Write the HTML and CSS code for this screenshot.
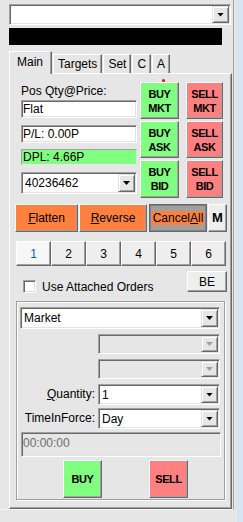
FILE: index.html
```html
<!DOCTYPE html>
<html lang="en">

<head>
    <meta charset="UTF-8">
    <meta name="viewport" content="width=device-width, initial-scale=1.0">
    <title>Order Entry</title>
    <link rel="stylesheet" href="styles.css">
</head>

<body>
    <div class="frame">
        <div class="combo symbol-combo">
            <span class="combo-text"></span>
            <span class="drop"></span>
        </div>
        <div class="ticker"></div>

        <div class="tabs">
            <span class="tab active">Main</span>
            <span class="tab">Targets</span>
            <span class="tab">Set</span>
            <span class="tab">C</span>
            <span class="tab">A</span>
        </div>

        <div class="page">
            <div class="quote">
                <div class="position">
                    <div class="pos-label">Pos Qty@Price:</div>
                    <div class="field">Flat</div>
                    <div class="field pl">P/L: 0.00P</div>
                    <div class="field dpl">DPL: 4.66P</div>
                    <div class="combo account-combo">
                        <span class="combo-text">40236462</span>
                        <span class="drop"></span>
                    </div>
                </div>
                <div class="trade-grid">
                    <button class="btn buy mkt">BUY<br>MKT<span class="dot"></span></button>
                    <button class="btn sell">SELL<br>MKT</button>
                    <button class="btn buy">BUY<br>ASK</button>
                    <button class="btn sell">SELL<br>ASK</button>
                    <button class="btn buy">BUY<br>BID</button>
                    <button class="btn sell">SELL<br>BID</button>
                </div>
            </div>

            <div class="actions">
                <button class="btn orange flatten"><u>F</u>latten</button>
                <button class="btn orange reverse"><u>R</u>everse</button>
                <button class="btn cancel-all"><span>Cancel<u>A</u>ll</span></button>
                <button class="btn light m-btn">M</button>
            </div>

            <div class="slots">
                <button class="btn light slot selected">1</button>
                <button class="btn light slot">2</button>
                <button class="btn light slot">3</button>
                <button class="btn light slot">4</button>
                <button class="btn light slot">5</button>
                <button class="btn light slot">6</button>
            </div>

            <div class="attach">
                <span class="checkbox"></span>
                <span class="attach-label">Use Attached Orders</span>
                <button class="btn light be-btn">BE</button>
            </div>

            <div class="group">
                <div class="combo type-combo">
                    <span class="combo-text">Market</span>
                    <span class="drop"></span>
                </div>
                <div class="row">
                    <span class="row-label"></span>
                    <div class="combo disabled">
                        <span class="combo-text"></span>
                        <span class="drop"></span>
                    </div>
                </div>
                <div class="row">
                    <span class="row-label"></span>
                    <div class="combo disabled">
                        <span class="combo-text"></span>
                        <span class="drop"></span>
                    </div>
                </div>
                <div class="row qty-row">
                    <span class="row-label"><u>Q</u>uantity:</span>
                    <div class="combo">
                        <span class="combo-text">1</span>
                        <span class="drop"></span>
                    </div>
                </div>
                <div class="row tif-row">
                    <span class="row-label">TimeInForce:</span>
                    <div class="combo">
                        <span class="combo-text">Day</span>
                        <span class="drop"></span>
                    </div>
                </div>
                <div class="time-box">00:00:00</div>
                <div class="submit">
                    <button class="btn buy submit-btn">BUY</button>
                    <button class="btn sell submit-btn">SELL</button>
                </div>
            </div>
        </div>
    </div>
    <div class="rail"></div>
</body>

</html>
```

FILE: styles.css
```css
body {
    margin: 0;
    width: 243px;
    height: 522px;
    display: flex;
    background-color: #e6e6e6;
    font-family: "Liberation Sans", Arial, sans-serif;
    font-size: 12px;
    color: #000;
    overflow: hidden;
}

.frame {
    width: 233px;
    height: 505px;
    padding-top: 4px;
    border-right: 1px solid #a0a0a0;
    border-bottom: 1px solid #f4f4f4;
}

.rail {
    margin-left: auto;
    width: 6px;
    background-color: #d7e4f3;
}

/* sunken inputs */
.combo,
.field,
.time-box,
.checkbox {
    box-sizing: border-box;
    background-color: #fff;
    border: 1px solid;
    border-color: #a0a0a0 #fff #fff #a0a0a0;
    box-shadow: inset 1px 1px #696969, inset -1px -1px #e3e3e3;
}

.combo {
    display: flex;
    height: 22px;
    padding: 1px;
}

.combo-text {
    flex: 1;
    padding: 1px 0 0 2px;
    line-height: 17px;
}

.drop {
    width: 17px;
    box-sizing: border-box;
    background-color: #e6e6e6;
    border: 1px solid;
    border-color: #e3e3e3 #696969 #696969 #e3e3e3;
    box-shadow: inset 1px 1px #fff, inset -1px -1px #a0a0a0;
    display: flex;
    align-items: center;
    justify-content: center;
}

.drop::after {
    content: "";
    width: 7px;
    height: 4px;
    background-color: #000;
    clip-path: polygon(0 0, 100% 0, 50% 100%);
}

.combo.disabled {
    background-color: #e6e6e6;
}

.combo.disabled .drop::after {
    background-color: #a0a0a0;
}

.symbol-combo {
    margin-left: 9px;
    width: 222px;
    height: 21px;
}

.ticker {
    margin: 3px 0 0 9px;
    width: 213px;
    height: 17px;
    background-color: #000;
}

/* tabs */
.tabs {
    display: flex;
    align-items: flex-end;
    margin: 6px 0 0 9px;
    height: 22px;
}

.tab {
    box-sizing: border-box;
    height: 19px;
    padding: 2px 4px 0 4px;
    line-height: 14px;
    border-left: 1px solid #fff;
    border-top: 1px solid #fff;
    border-right: 1px solid #696969;
    box-shadow: inset -1px 0 #a0a0a0;
    margin-left: 1px;
}

.tab.active {
    position: relative;
    z-index: 1;
    height: 23px;
    margin: 0 0 -1px 0;
    padding: 3px 8px 0 7px;
    background-color: #e6e6e6;
}

.page {
    box-sizing: border-box;
    margin-left: 9px;
    width: 223px;
    height: 436px;
    border: 1px solid;
    border-color: #fff #696969 #696969 #fff;
    box-shadow: inset -1px -1px #a0a0a0;
}

/* position and quick trade */
.quote {
    display: flex;
    margin-top: 8px;
}

.position {
    margin: 2px 0 0 11px;
    width: 116px;
}

.pos-label {
    line-height: 14px;
}

.field {
    margin-top: 2px;
    height: 18px;
    padding: 1px 0 0 1px;
    line-height: 15px;
}

.field.pl {
    margin-top: 7px;
}

.field.dpl {
    margin-top: 6px;
    height: 16px;
    padding-top: 0;
    line-height: 14px;
    background-color: #80ff80;
    border-color: #a0a0a0 #e6e6e6 #e6e6e6 #a0a0a0;
    box-shadow: none;
}

.account-combo {
    margin-top: 7px;
}

.trade-grid {
    margin-left: 3px;
    display: grid;
    grid-template-columns: 39px 37px;
    grid-template-rows: 37px 37px 38px;
    column-gap: 7px;
    row-gap: 2px;
}

.btn {
    box-sizing: border-box;
    margin: 0;
    padding: 0;
    font-family: inherit;
    font-size: 12px;
    color: #000;
    line-height: 14px;
    background-color: #eeeeee;
    border: 1px solid;
    border-color: #fff #696969 #696969 #fff;
    box-shadow: inset -1px -1px #a0a0a0;
}

.btn.buy,
.btn.sell {
    font-size: 11px;
    font-weight: bold;
    letter-spacing: -0.4px;
}

.btn.buy {
    background-color: #80ff80;
}

.btn.sell {
    background-color: #ff8080;
}

.mkt {
    position: relative;
}

.dot {
    position: absolute;
    left: 21px;
    top: -4px;
    width: 3px;
    height: 3px;
    border-radius: 50%;
    background-color: #e8000b;
}

/* flatten / reverse row */
.actions {
    display: flex;
    margin: 6px 0 0 5px;
    height: 28px;
}

.btn.orange {
    background-color: #ff8040;
}

.flatten {
    width: 63px;
}

.reverse {
    margin-left: 1px;
    width: 68px;
}

.cancel-all {
    margin-left: 2px;
    width: 58px;
    background-color: #a0a0a0;
    border-color: #696969;
    box-shadow: inset 1px 1px #808080, inset -1px -1px #808080;
}

.cancel-all span {
    display: inline-block;
    padding: 0 1px;
    background-color: #ff8040;
}

.m-btn {
    margin-left: 1px;
    width: 19px;
    font-weight: bold;
    font-size: 13px;
}

/* strategy slots */
.slots {
    display: flex;
    margin: 9px 0 0 6px;
    height: 25px;
}

.slot {
    width: 35px;
}

.slot.selected {
    background-color: #f7f7f7;
    color: #0a5fb4;
}

/* attached orders */
.attach {
    display: flex;
    align-items: flex-start;
    margin-top: 5px;
    height: 21px;
}

.checkbox {
    margin: 9px 0 0 13px;
    width: 13px;
    height: 13px;
}

.attach-label {
    margin: 9px 0 0 6px;
    line-height: 14px;
}

.be-btn {
    margin: 0 4px 0 auto;
    width: 40px;
    height: 21px;
}

/* order ticket */
.group {
    box-sizing: border-box;
    margin: 9px 0 0 6px;
    width: 209px;
    height: 199px;
    padding: 5px 0 0 3px;
    border: 1px solid #a0a0a0;
    box-shadow: inset 1px 1px #fff, 1px 1px #fff;
}

.type-combo {
    width: 200px;
}

.row {
    display: flex;
    margin-top: 5px;
}

.row .combo {
    width: 122px;
    height: 20px;
}

.row-label {
    width: 75px;
    padding-right: 3px;
    text-align: right;
    line-height: 21px;
}

.qty-row .combo,
.tif-row .combo {
    height: 21px;
}

.tif-row {
    margin-top: 3px;
}

.time-box {
    margin: 3px 0 0 1px;
    width: 200px;
    height: 25px;
    padding: 3px 0 0 1px;
    line-height: 14px;
    color: #6d6d6d;
    background-color: #e6e6e6;
}

.submit {
    display: flex;
    margin: 3px 0 0 43px;
}

.submit-btn {
    width: 39px;
    height: 38px;
}

.submit-btn + .submit-btn {
    margin-left: 47px;
}
```
